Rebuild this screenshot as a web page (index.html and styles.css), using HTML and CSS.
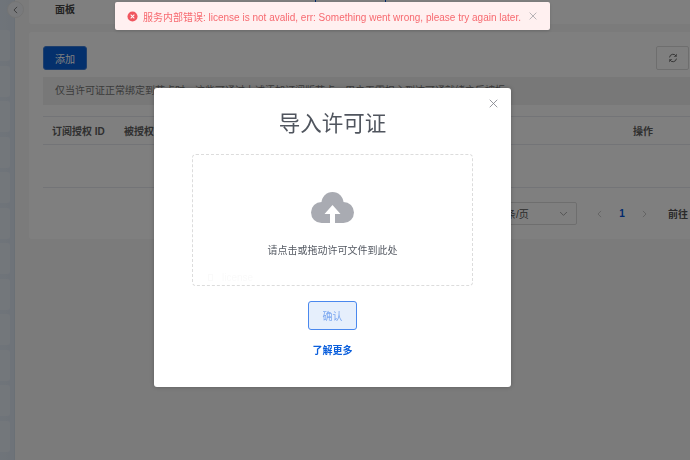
FILE: index.html
```html
<!DOCTYPE html>
<html lang="zh">
<head>
<meta charset="utf-8">
<title>导入许可证</title>
<link rel="stylesheet" href="styles.css">
</head>
<body>
<div class="app">
  <aside class="sidebar">
    <div class="side-item"></div><div class="side-item"></div><div class="side-item"></div><div class="side-item"></div><div class="side-item"></div><div class="side-item"></div><div class="side-item"></div><div class="side-item"></div><div class="side-item"></div><div class="side-item"></div><div class="side-item"></div><div class="side-item"></div>
  </aside>
  <main class="main">
    <div class="tabs"><span class="tab">面板</span><span class="tab-active"></span></div>
    <section class="card">
      <div class="toolbar">
        <button class="btn-add">添加</button>
        <button class="btn-refresh"><svg viewBox="0 0 16 16" width="10" height="10" fill="none" stroke="#555" stroke-width="1.4"><path d="M2.5 7A5.6 5.6 0 0 1 13 5M13.500 9A5.600 5.600 0 0 1 3 11"/><path d="M13.500 1.500V5.500H9.500M2.500 14.500V10.500H6.500" stroke-width="1"/></svg></button>
      </div>
      <div class="notice">仅当许可证正常绑定到节点时，这些可通过上述添加订阅版节点，用户无需担心到达可通就绪之后被拒</div>
      <div class="thead">
        <span class="th th-id">订阅授权 ID</span>
        <span class="th th-owner">被授权人</span>
        <span class="th th-op">操作</span>
      </div>
      <div class="tbody"></div>
      <div class="pager">
        <div class="select"><span>10 条/页</span><svg viewBox="0 0 12 12" width="9" height="9" fill="none" stroke="#8a8a8a" stroke-width="1"><path d="M1.500 4l4.500 4.500L10.500 4"/></svg></div>
        <span class="arrow arrow-prev">
          <svg viewBox="0 0 8 12" width="5" height="8" fill="none" stroke="#b5b5b5" stroke-width="1.200"><path d="M6.500 1L1.500 6l5 5"/></svg>
        </span>
        <span class="page">1</span>
        <span class="arrow arrow-next">
          <svg viewBox="0 0 8 12" width="5" height="8" fill="none" stroke="#b5b5b5" stroke-width="1.200"><path d="M1.500 1l5 5-5 5"/></svg>
        </span>
        <span class="goto">前往</span>
      </div>
    </section>
  </main>
</div>
<button class="collapse"><svg viewBox="0 0 8 12" width="5" height="8" fill="none" stroke="#555" stroke-width="1.200"><path d="M6.500 1L1.500 6l5 5"/></svg></button>

<div class="overlay"></div>

<div class="modal">
  <svg class="modal-close" viewBox="0 0 10 10" width="9" height="9" fill="none" stroke="#7d8087" stroke-width="0.900"><path d="M.8.8l8.400 8.400M9.200.8L.8 9.200"/></svg>
  <h1 class="modal-title">导入许可证</h1>
  <div class="drop">
    <svg class="cloud" viewBox="0 0 43 32" width="43" height="32">
      <g fill="#a9abb2">
        <circle cx="10.500" cy="20.500" r="10.500"/>
        <circle cx="32.500" cy="20.500" r="10.500"/>
        <circle cx="21.500" cy="11" r="11"/>
        <rect x="10.500" y="12" width="22" height="19"/>
      </g>
      <path fill="#fff" d="M21.500 13L13.500 22H19V31H24V22H29.500z"/>
    </svg>
    <p class="drop-text">请点击或拖动许可文件到此处</p>
    <span class="ghost"><i class="ghost-icon"></i>license</span>
  </div>
  <button class="confirm">确认</button>
  <a class="more">了解更多</a>
</div>

<div class="toast">
  <svg class="toast-icon" viewBox="0 0 12 12" width="11" height="11"><circle cx="6" cy="6" r="5.500" fill="#f0565f"/><path d="M4 4l4 4M8 4l-4 4" stroke="#fff" stroke-width="1.100"/></svg>
  <span class="toast-text">服务内部错误: license is not avalid, err: Something went wrong, please try again later.</span>
  <svg class="toast-close" viewBox="0 0 10 10" width="8" height="8" fill="none" stroke="#9a9a9f" stroke-width="0.900"><path d="M.8.8l8.400 8.400M9.200.8L.8 9.200"/></svg>
</div>
</body>
</html>
```
FILE: styles.css
```css
* { box-sizing: border-box; }
html, body { margin: 0; height: 100%; overflow: hidden; }
body {
  width: 690px; height: 460px; background: #f6f6f6;
  font-family: "Liberation Sans", "Noto Sans CJK SC", sans-serif;
  font-size: 10px; color: #333;
}
.app { display: flex; height: 460px; overflow: hidden; }
.sidebar {
  width: 15px; flex: none; padding-top: 30px;
  display: flex; flex-direction: column; gap: 4.500px;
  background: linear-gradient(90deg, #dfe9f4, #dce6f2);
  border-right: 1px solid #d5e0ec;
}
.side-item { height: 31px; flex: none; width: 10px; background: #e7eef7; border-radius: 0 3px 3px 0; }
.main { width: 700px; flex: none; padding: 0 0 0 14px; display: flex; flex-direction: column; gap: 8px; }
.tabs { height: 24px; display: flex; align-items: flex-start; background: #fff; border-radius: 0 0 3px 3px; padding-left: 26px; line-height: 20px; }
.tab { font-weight: bold; color: #444; font-size: 10px; width: 20px; white-space: nowrap; }
.tab-active { width: 71px; height: 2px; margin-left: 240px; border-left: 1px solid #0052d9; border-right: 1px solid #0052d9; }
.card { width: 690px; height: 207px; background: #fff; border-radius: 3px; padding: 14px; }
.toolbar { display: flex; justify-content: flex-start; height: 24px; }
.btn-add {
  width: 44px; height: 24px; background: #0860d8; color: #fff; border: 1px solid #3f7fd8; border-radius: 3px;
  font: inherit; padding: 0; margin: 0;
}
.btn-refresh {
  width: 33px; height: 24px; margin-left: 569px; background: #fff;
  border: 1px solid #ddd; border-radius: 2px; padding: 0;
  display: flex; align-items: center; justify-content: center;
}
.notice {
  margin-top: 7px; height: 28px; width: 662px; line-height: 27px; padding-left: 12px;
  background: #f1f1f1; color: #777; white-space: nowrap; overflow: hidden;
}
.thead {
  margin-top: 11px; height: 29px; display: flex; align-items: center;
  border-top: 1px solid #e6e8ee; border-bottom: 1px solid #e6e8ee;
  font-weight: bold; color: #606060;
}
.th-id { margin-left: 9px; width: 72px; }
.th-owner { width: 509px; }
.tbody { height: 43px; border-bottom: 1px solid #e6e8ee; }
.pager { display: flex; align-items: center; margin-top: 14px; height: 23px; padding-left: 440px; color: #555; }
.select {
  width: 94px; height: 23px; flex: none; border: 1px solid #ddd; border-radius: 2px;
  display: flex; align-items: center; justify-content: space-between; padding: 0 8px;
}
.arrow { display: inline-flex; width: 6px; flex: none; }
.arrow-prev { margin-left: 20px; }
.arrow-next { margin-left: 16px; }
.page { margin-left: 15px; width: 8px; flex: none; text-align: center; color: #0052d9; font-weight: bold; }
.goto { margin-left: 20px; font-weight: bold; white-space: nowrap; }
.collapse {
  position: absolute; left: 7px; top: 1px; width: 17px; height: 17px; padding: 0;
  border-radius: 50%; border: 1px solid #e8e8e8; background: #f3f5f8;
  display: flex; align-items: center; justify-content: center;
}
.overlay { position: fixed; inset: 0; background: rgba(0, 0, 0, .5); }
.modal {
  position: absolute; left: 154px; top: 88px; width: 357px; height: 299px;
  background: #fff; border-radius: 3px; box-shadow: 0 0 4px rgba(0,0,0,.25);
  display: flex; flex-direction: column; align-items: center;
}
.modal-close { position: absolute; right: 13px; top: 11px; }
.modal-title { margin: 21px 0 0; font-size: 21.500px; line-height: 30px; font-weight: 400; color: #50555e; }
.drop {
  position: relative; margin-top: 15px; width: 281px; height: 132px;
  border: 1px dashed #dcdcdc; border-radius: 4px;
  display: flex; flex-direction: column; align-items: center;
}
.cloud { margin-top: 37px; }
.drop-text { margin: 20px 0 0; font-size: 10px; line-height: 14px; color: #555a63; }
.ghost { position: absolute; left: 15px; bottom: 2px; display: flex; align-items: center; gap: 9px; font-size: 10px; color: #fafafa; }
.ghost-icon { width: 5px; height: 7px; border: 1px solid #fafafa; }
.confirm {
  margin-top: 15px; width: 49px; height: 29px; padding: 0;
  background: #e6effc; border: 1px solid #4a88ee; border-radius: 3px;
  font: inherit; color: #7ba7f0;
}
.more { margin-top: 13.500px; color: #0b5fdc; font-weight: bold; font-size: 10px; line-height: 14px; }
.toast {
  position: absolute; left: 115px; top: 2px; width: 435px; height: 28px;
  background: #fff0f0; border-radius: 2px; padding-left: 12px;
  display: flex; align-items: center; box-shadow: 0 1px 3px rgba(0,0,0,.15);
}
.toast-icon { flex: none; }
.toast-text { margin-left: 5px; color: #f76a70; font-size: 10px; white-space: nowrap; }
.toast-close { flex: none; margin-left: 8px; }
```
